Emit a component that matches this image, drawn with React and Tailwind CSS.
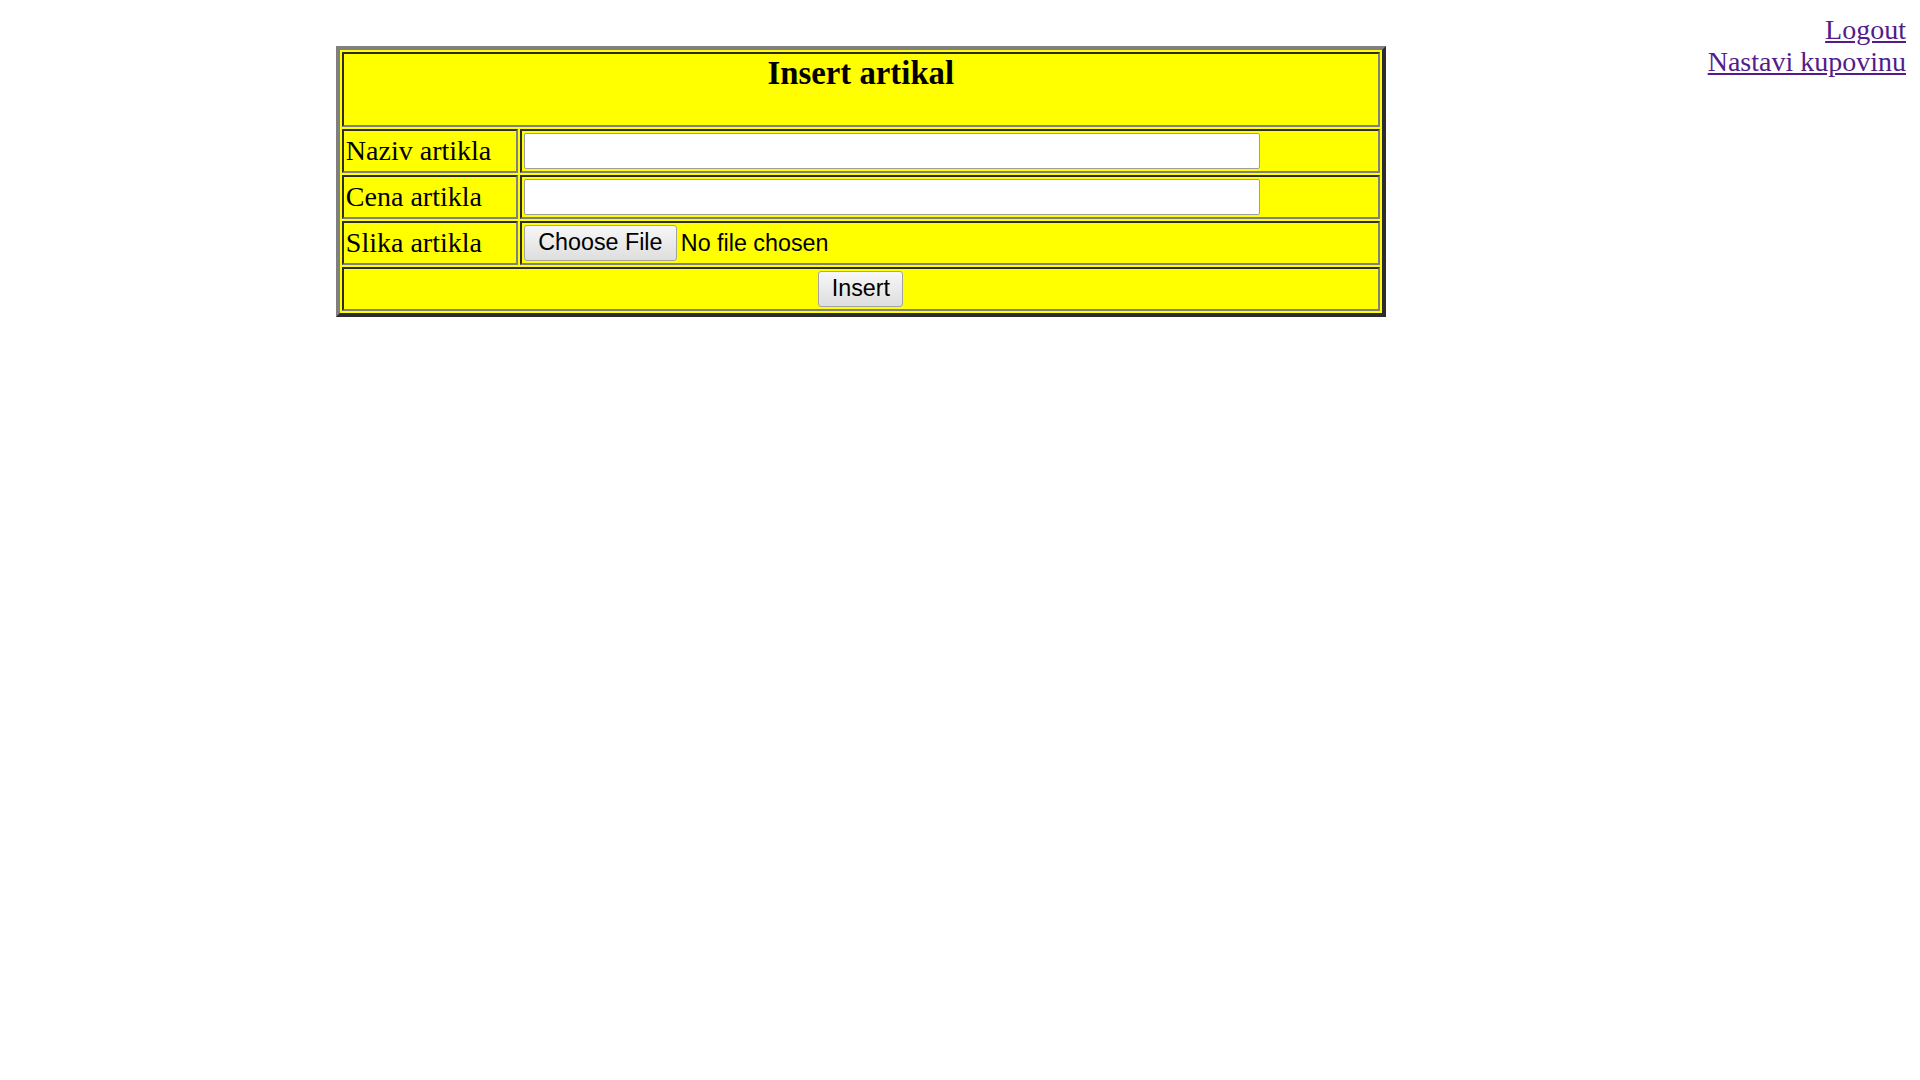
// Insert artikal form page

const cellBorder =
  "border-2 border-t-[#2c2c2c] border-l-[#2c2c2c] border-r-[#808080] border-b-[#808080]";

const labelCell = `${cellBorder} h-[44px] pl-[2px] pr-[2px] pt-[1px] pb-[3px] align-middle leading-[31px] whitespace-nowrap`;

const FormButton = ({ children, className = "" }) => (
  <button
    type="button"
    className={`flex items-center justify-center h-[36px] rounded-[3px] border border-[#a3a3a3] bg-gradient-to-b from-[#f7f7f7] to-[#dedede] font-['Liberation_Sans',Arial,sans-serif] text-[23.3px] leading-none text-black ${className}`}
  >
    {children}
  </button>
);

const TextRow = ({ label }) => (
  <tr>
    <td className={labelCell}>{label}</td>
    <td className={`${cellBorder} h-[44px] p-[2px] align-middle`}>
      <input
        type="text"
        className="block w-[736px] h-[36px] bg-white border border-[#9e9e9e] rounded-[2px] outline-none"
      />
    </td>
  </tr>
);

export default function App() {
  return (
    <div className="flex p-[14px] font-['Liberation_Serif','Times_New_Roman',serif] text-[28px] text-black bg-white min-h-screen">
      <div className="flex-1 pt-[32px]">
        <table className="mx-auto w-[1050px] table-fixed border-separate border-spacing-[2px] bg-[#ffff00] border-4 border-t-[#808080] border-l-[#808080] border-r-[#2c2c2c] border-b-[#2c2c2c]">
          <colgroup>
            <col className="w-[176px]" />
            <col />
          </colgroup>
          <tbody>
            <tr>
              <td colSpan={2} className={`${cellBorder} h-[75px] p-0 align-top text-center`}>
                <div className="pt-[1px] text-[32.76px] font-bold leading-[36px]">Insert artikal</div>
              </td>
            </tr>
            <TextRow label="Naziv artikla" />
            <TextRow label="Cena artikla" />
            <tr>
              <td className={labelCell}>Slika artikla</td>
              <td className={`${cellBorder} h-[44px] p-[2px] align-middle`}>
                <div className="flex items-center gap-[4px]">
                  <FormButton className="w-[153px]">Choose File</FormButton>
                  <span className="font-['Liberation_Sans',Arial,sans-serif] text-[23.3px] leading-[27px]">
                    No file chosen
                  </span>
                </div>
              </td>
            </tr>
            <tr>
              <td colSpan={2} className={`${cellBorder} h-[44px] p-[2px] align-middle`}>
                <div className="flex justify-center">
                  <FormButton className="w-[85px]">Insert</FormButton>
                </div>
              </td>
            </tr>
          </tbody>
        </table>
      </div>
      <div className="text-right leading-[32px] whitespace-nowrap">
        <a href="#" className="text-[#551a8b] underline">Logout</a>
        <br />
        <a href="#" className="text-[#551a8b] underline">Nastavi kupovinu</a>
      </div>
    </div>
  );
}
